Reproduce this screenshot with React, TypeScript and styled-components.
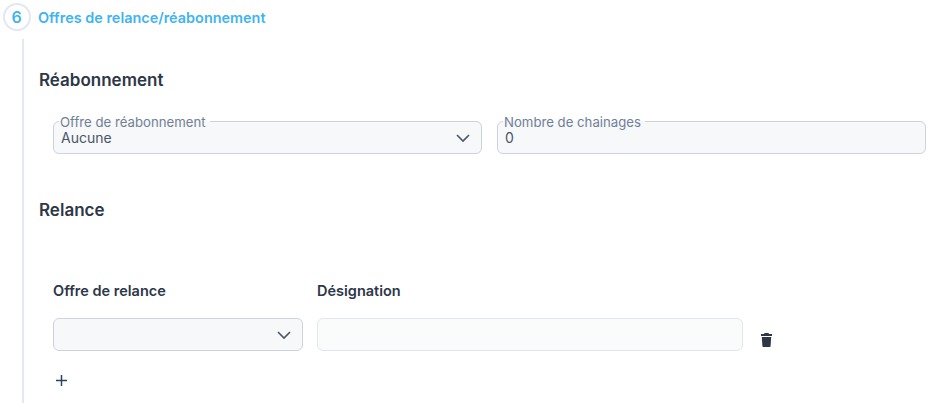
import React from "react";
import styled, { createGlobalStyle } from "styled-components";

const Global = createGlobalStyle`
  html, body { margin: 0; padding: 0; background: #fff; }
  body { font-family: Inter, "Liberation Sans", sans-serif; color: #2d3748; overflow: hidden; }
`;

const Page = styled.div`
  width: 938px;
  height: 403px;
  overflow: hidden;
  padding: 3px 12px 0 3px;
  box-sizing: border-box;
`;

const StepHeader = styled.div`
  display: flex;
  align-items: center;
  gap: 7px;
  height: 28px;
`;

const StepCircle = styled.div`
  width: 28px;
  height: 28px;
  box-sizing: border-box;
  border: 2px solid #e2e8f3;
  border-radius: 50%;
  display: flex;
  align-items: center;
  justify-content: center;
  padding-right: 1px;
  color: #3fb4f0;
  font-size: 16px;
  font-weight: 600;
`;

const StepTitle = styled.div`
  color: #3fb4f0;
  font-size: 14.45px;
  font-weight: 600;
  padding-top: 1px;
`;

const StepBody = styled.div`
  margin: 8px 0 0 19px;
  border-left: 2px solid #e2e8f3;
  padding: 31px 0 0 14px;
  height: 400px;
  box-sizing: border-box;
`;

const SectionTitle = styled.h2`
  margin: 0 0 0 1px;
  font-size: 17px;
  line-height: 20px;
  font-weight: 600;
  color: #2d3748;
`;

const FieldRow = styled.div`
  display: grid;
  grid-template-columns: 429px 429px;
  column-gap: 15px;
  margin: 25px 0 0 15px;
`;

const Outlined = styled.fieldset`
  margin: 0;
  min-width: 0;
  height: 39px;
  box-sizing: border-box;
  padding: 0 7px;
  border: 1px solid #cdd3dc;
  border-radius: 6px;
  background: #f7f8fa;
  display: flex;
  align-items: center;
  justify-content: space-between;
  position: relative;
`;

const Legend = styled.legend`
  padding: 0 4px 0 1px;
  margin-left: -2px;
  font-size: 13.2px;
  line-height: 15px;
  color: #718096;
  height: 13px;
`;

const Value = styled.span`
  font-size: 14px;
  line-height: 17px;
  color: #4a5568;
  margin-top: -6px;
`;

const Chevron = ({ className }: { className?: string }) => (
  <svg className={className} width="16" height="10" viewBox="0 0 16 10" fill="none">
    <path d="M2 2l6 6 6-6" stroke="#4a5568" strokeWidth="1.6" />
  </svg>
);

const SelectChevron = styled(Chevron)<{ $lift?: number }>`
  flex: none;
  margin-top: ${(p) => -(p.$lift ?? 0)}px;
  margin-right: 3px;
`;

const RelanceTitle = styled(SectionTitle)`
  margin-top: 46px;
`;

const RelanceGrid = styled.div`
  display: grid;
  grid-template-columns: 250px 426px 24px;
  column-gap: 14px;
  margin: 63px 0 0 15px;
  align-items: center;
`;

const ColumnHead = styled.div`
  font-size: 14.5px;
  line-height: 16px;
  font-weight: 600;
  color: #2d3748;
  margin-bottom: 19px;
`;

const SelectBox = styled.div`
  height: 33px;
  box-sizing: border-box;
  border: 1px solid #cdd3dc;
  border-radius: 6px;
  background: #f7f8fa;
  display: flex;
  align-items: center;
  justify-content: flex-end;
  padding-right: 7px;
`;

const TextBox = styled.div`
  height: 33px;
  box-sizing: border-box;
  border: 1px solid #e3e6ea;
  border-radius: 6px;
  background: #fafbfb;
`;

const IconButton = styled.div`
  display: flex;
  align-items: center;
  padding: 10px 0 0 4px;
`;

const AddButton = styled.div`
  margin: 24px 0 0 18px;
  width: 11px;
  height: 11px;
  display: flex;
`;

export default function App() {
  return (
    <Page>
      <Global />
      <StepHeader>
        <StepCircle>6</StepCircle>
        <StepTitle>Offres de relance/réabonnement</StepTitle>
      </StepHeader>
      <StepBody>
        <SectionTitle>Réabonnement</SectionTitle>
        <FieldRow>
          <Outlined>
            <Legend>Offre de réabonnement</Legend>
            <Value>Aucune</Value>
            <SelectChevron $lift={6} />
          </Outlined>
          <Outlined>
            <Legend>Nombre de chainages</Legend>
            <Value>0</Value>
          </Outlined>
        </FieldRow>
        <RelanceTitle>Relance</RelanceTitle>
        <RelanceGrid>
          <ColumnHead>Offre de relance</ColumnHead>
          <ColumnHead>Désignation</ColumnHead>
          <span />
          <SelectBox>
            <SelectChevron />
          </SelectBox>
          <TextBox />
          <IconButton>
            <svg width="11" height="14" viewBox="0 0 11 14">
              <path fill="#2d3748" d="M3.500 0h4l.5 1h3v2H0V1h3zM.8 4h9.400l-.6 9a1 1 0 0 1-1 1H2.400a1 1 0 0 1-1-1z" />
            </svg>
          </IconButton>
        </RelanceGrid>
        <AddButton>
          <svg width="11" height="11" viewBox="0 0 11 11">
            <path d="M5.500 0v11M0 5.500h11" stroke="#2a4365" strokeWidth="1.500" />
          </svg>
        </AddButton>
      </StepBody>
    </Page>
  );
}
